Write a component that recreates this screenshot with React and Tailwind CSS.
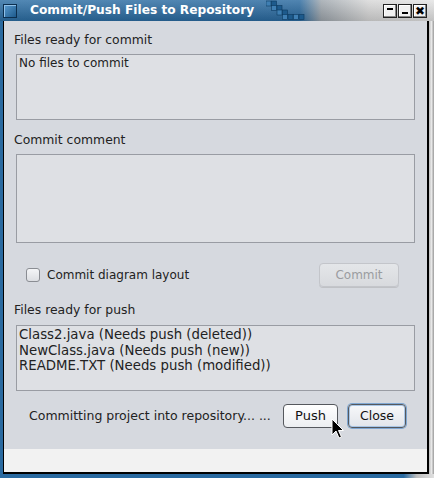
import React from "react";

function Checker() {
  const cells = [
    [0, 0], [1, 0], [1, 1], [2, 1], [2, 2], [3, 2], [3, 3], [4, 3], [5, 3], [6, 3],
  ];
  return (
    <svg width="40" height="22" viewBox="0 0 40 22" className="shrink-0">
      {cells.map(([cx, cy], i) => (
        <rect key={i} x={cx * 5.5} y={cy * 4.5 + 2} width="5" height="5" fill={i % 2 ? "#1d5a8c" : "#3f7fb3"} stroke="#0d3a60" strokeWidth="0.6" />
      ))}
    </svg>
  );
}

function WinBtn({ children }) {
  return (
    <div className="w-[14px] h-[14px] bg-[#f0f0f0] border border-[#222] flex items-center justify-center shadow-[inset_-1px_-1px_0_#888,inset_1px_1px_0_#fff]">
      {children}
    </div>
  );
}

function Box({ h, children, text = "text-[12px] leading-[15px]" }) {
  return (
    <div className={`mx-[12px] ${h} border border-[#999ca3] bg-[#dee0e4] px-[2px] pt-[1px] ${text} text-[#222]`}>
      {children}
    </div>
  );
}

export default function App() {
  return (
    <div className="w-[434px] h-[478px] flex flex-col bg-[#c8c8c8] font-['DejaVu_Sans',sans-serif] relative overflow-hidden">
      {/* title bar */}
      <div className="h-[21px] flex items-stretch bg-[linear-gradient(to_right,#2c6ea4_0%,#2a6aa0_69%,#9ea6ad_74%,#d8d8d8_85%,#e4e4e4_100%)]">
        <div className="flex-1 flex items-center bg-[linear-gradient(to_bottom,rgba(255,255,255,0.18),rgba(0,0,0,0.15))]">
          <div className="ml-[3px] w-[14px] h-[14px] border border-[#0c2f4f] bg-[linear-gradient(135deg,#5a9bd0,#1d5a8c)] shadow-[inset_1px_1px_0_#8ec0e8]" />
          <div className="ml-[13px] text-white font-bold text-[12.2px] leading-[21px] whitespace-nowrap">
            Commit/Push Files to Repository
          </div>
          <div className="ml-[12px] self-end">
            <Checker />
          </div>
          <div className="flex-1" />
          <div className="flex gap-[1px] mr-[7px] items-center">
            <WinBtn>
              <div className="w-[6px] h-[2px] bg-black mb-[3px]" />
            </WinBtn>
            <WinBtn>
              <div className="w-[6px] h-[2px] bg-black mt-[5px]" />
            </WinBtn>
            <WinBtn>
              <span className="text-[12px] font-bold leading-none text-black">✖</span>
            </WinBtn>
          </div>
        </div>
      </div>

      {/* body */}
      <div className="flex-1 flex">
        <div className="w-[4px] bg-[#2a6aa0] border-r border-black" />
        <div className="flex-1 flex flex-col">
          <div className="bg-[#d6d9df] h-[428px] flex flex-col text-[12.4px] text-[#222]">
            <div className="mt-[11px] ml-[10px] leading-[16px]">Files ready for commit</div>
            <div className="mt-[6px]">
              <Box h="h-[66px]">No files to commit</Box>
            </div>
            <div className="mt-[12px] ml-[10px] leading-[16px]">Commit comment</div>
            <div className="mt-[6px]">
              <Box h="h-[89px]" />
            </div>
            <div className="mt-[20px] h-[24px] flex items-center">
              <div className="ml-[22px] w-[14px] h-[14px] rounded-[3px] border border-[#8a8d93] bg-[linear-gradient(to_bottom,#f4f5f7,#dcdee2)]" />
              <div className="ml-[7px] leading-[16px] text-[12px]">Commit diagram layout</div>
              <div className="flex-1" />
              <div className="mr-[28px] w-[80px] h-[24px] rounded-[4px] border border-[#c3c5ca] bg-[linear-gradient(to_bottom,#e4e6e9,#d8dade)] flex items-center justify-center text-[12px] text-[#9a9ca0] shadow-[0_1px_0_#bfc1c5]">
                Commit
              </div>
            </div>
            <div className="mt-[15px] ml-[10px] leading-[16px]">Files ready for push</div>
            <div className="mt-[7px]">
              <Box h="h-[66px]" text="text-[13.3px] leading-[15.5px]">
                <div>Class2.java (Needs push (deleted))</div>
                <div>NewClass.java (Needs push (new))</div>
                <div>README.TXT (Needs push (modified))</div>
              </Box>
            </div>
            <div className="mt-[13px] h-[24px] flex items-center">
              <div className="ml-[25px] leading-[16px] text-[12.5px]">Committing project into repository... ...</div>
              <div className="flex-1" />
              <div className="w-[55px] h-[24px] rounded-[4px] border border-[#55585d] bg-[linear-gradient(to_bottom,#ffffff,#eceef1)] flex items-center justify-center text-[13px] text-[#111]">
                Push
              </div>
              <div className="ml-[10px] mr-[21px] w-[58px] h-[24px] rounded-[4px] border border-[#55585d] bg-[linear-gradient(to_bottom,#f7f8fa,#e2e5ea)] flex items-center justify-center text-[12.5px] text-[#111] shadow-[0_0_0_1px_#7fa7d2,inset_0_0_0_1px_#a9c6e6]">
                Close
              </div>
            </div>
          </div>
          <div className="bg-[#f2f2f2] h-[23px]" />
          <div className="h-[2px] bg-black" />
        </div>
        <div className="w-[7px] border-l-2 border-black bg-[linear-gradient(to_right,#bdbdbd,#e8e8e8,#9a9a9a)]" />
      </div>
      <div className="h-[4px] bg-[linear-gradient(to_right,#2a6aa0_0%,#2a6aa0_93%,#bdbdbd_96%,#e0e0e0_100%)]" />

      {/* mouse cursor */}
      <svg className="absolute left-[331px] top-[418px]" width="14" height="22" viewBox="0 0 14 22">
        <path d="M1 1 L1 17 L5 13 L8 20 L10.5 19 L7.5 12.5 L12.5 12.5 Z" fill="#000" stroke="#fff" strokeWidth="1" strokeLinejoin="round" />
      </svg>
    </div>
  );
}
